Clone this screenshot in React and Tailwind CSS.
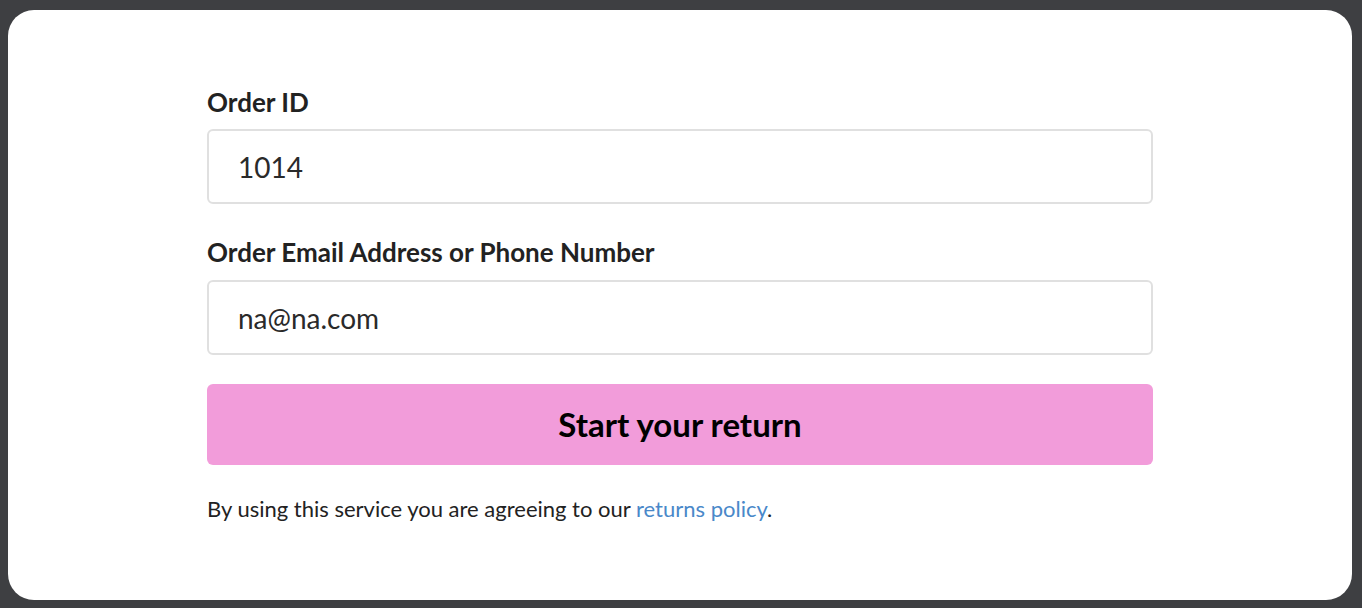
import React, { useState } from "react";

function App() {
  const [orderId, setOrderId] = useState("1014");
  const [contact, setContact] = useState("na@na.com");

  return (
    <div className="h-[608px] w-full bg-[#3e3f42] pt-[10px] pl-[8px] pr-[10px] pb-[8px] font-['Lato','Liberation_Sans',sans-serif]">
      <div className="flex h-full w-full justify-center rounded-[26px] bg-white">
        <form
          onSubmit={(e) => e.preventDefault()}
          className="w-[946px] pt-[76px]"
        >
          <label className="block text-[26px] font-bold leading-[32px] text-[#222]">
            Order ID
          </label>
          <input
            value={orderId}
            onChange={(e) => setOrderId(e.target.value)}
            className="mt-[11px] h-[75px] w-full rounded-[6px] border-2 border-[#e0e0e0] px-[29px] text-[28px] text-[#2a2a2a] focus:outline-none"
          />

          <label className="mt-[32px] block text-[26px] font-bold leading-[32px] text-[#222]">
            Order Email Address or Phone Number
          </label>
          <input
            value={contact}
            onChange={(e) => setContact(e.target.value)}
            className="mt-[12px] h-[75px] w-full rounded-[6px] border-2 border-[#e0e0e0] px-[29px] text-[28px] text-[#2a2a2a] focus:outline-none"
          />

          <button
            type="submit"
            className="mt-[29px] h-[81px] w-full rounded-[6px] bg-[#f29cda] text-[33px] font-bold text-black"
          >
            Start your return
          </button>

          <p className="mt-[30px] text-[22px] leading-[28px] text-[#222]">
            By using this service you are agreeing to our{" "}
            <a href="#" className="text-[#4a88c9]">
              returns policy
            </a>
            .
          </p>
        </form>
      </div>
    </div>
  );
}

export default App;
